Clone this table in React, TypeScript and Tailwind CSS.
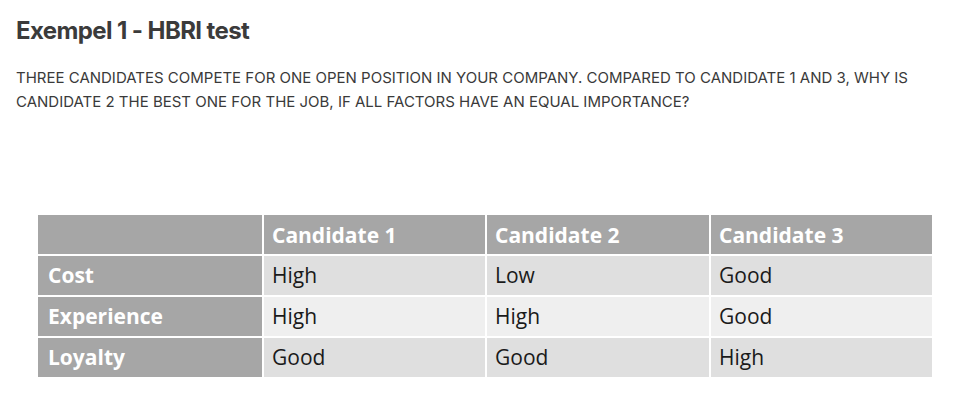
const rows = [
  { label: "Cost", values: ["High", "Low", "Good"], bg: "bg-[#dfdfdf]" },
  { label: "Experience", values: ["High", "High", "Good"], bg: "bg-[#efefef]" },
  { label: "Loyalty", values: ["Good", "Good", "High"], bg: "bg-[#dfdfdf]" },
];

export default function App() {
  return (
    <div className="min-h-[420px] bg-white px-4 pt-[17px] font-['Inter',sans-serif]">
      <h1 className="text-[24px] font-bold leading-7 tracking-[-0.6px] text-[#3b3b3b]">
        Exempel 1 - HBRI test
      </h1>

      <p className="mt-[21px] text-[15px] leading-6 text-[#3a3a3a]">
        THREE CANDIDATES COMPETE FOR ONE OPEN POSITION IN YOUR COMPANY. COMPARED TO CANDIDATE 1 AND 3, WHY IS
        CANDIDATE 2 THE BEST ONE FOR THE JOB, IF ALL FACTORS HAVE AN EQUAL IMPORTANCE?
      </p>

      {/* Table */}
      <div className="ml-[22px] mt-[101px] w-[894px] bg-white font-['Open_Sans',sans-serif]">
        <div className="grid grid-cols-[224px_221px_222px_221px] gap-[2px]">
          <div className="h-[39px] bg-[#a6a6a6]" />
          {["Candidate 1", "Candidate 2", "Candidate 3"].map((c) => (
            <div key={c} className="flex h-[39px] items-center bg-[#a6a6a6] pl-2 pt-[3px] text-[21px] font-bold text-white">
              {c}
            </div>
          ))}
          {rows.map((r) => (
            <>
              <div key={r.label} className="flex h-[39px] items-center bg-[#a6a6a6] pl-[10px] pt-[1px] text-[21px] font-bold text-white">
                {r.label}
              </div>
              {r.values.map((v, i) => (
                <div key={r.label + i} className={`flex h-[39px] items-center pl-2 pt-[1px] text-[21px] text-[#1a1a1a] ${r.bg}`}>
                  {v}
                </div>
              ))}
            </>
          ))}
        </div>
      </div>
    </div>
  );
}
